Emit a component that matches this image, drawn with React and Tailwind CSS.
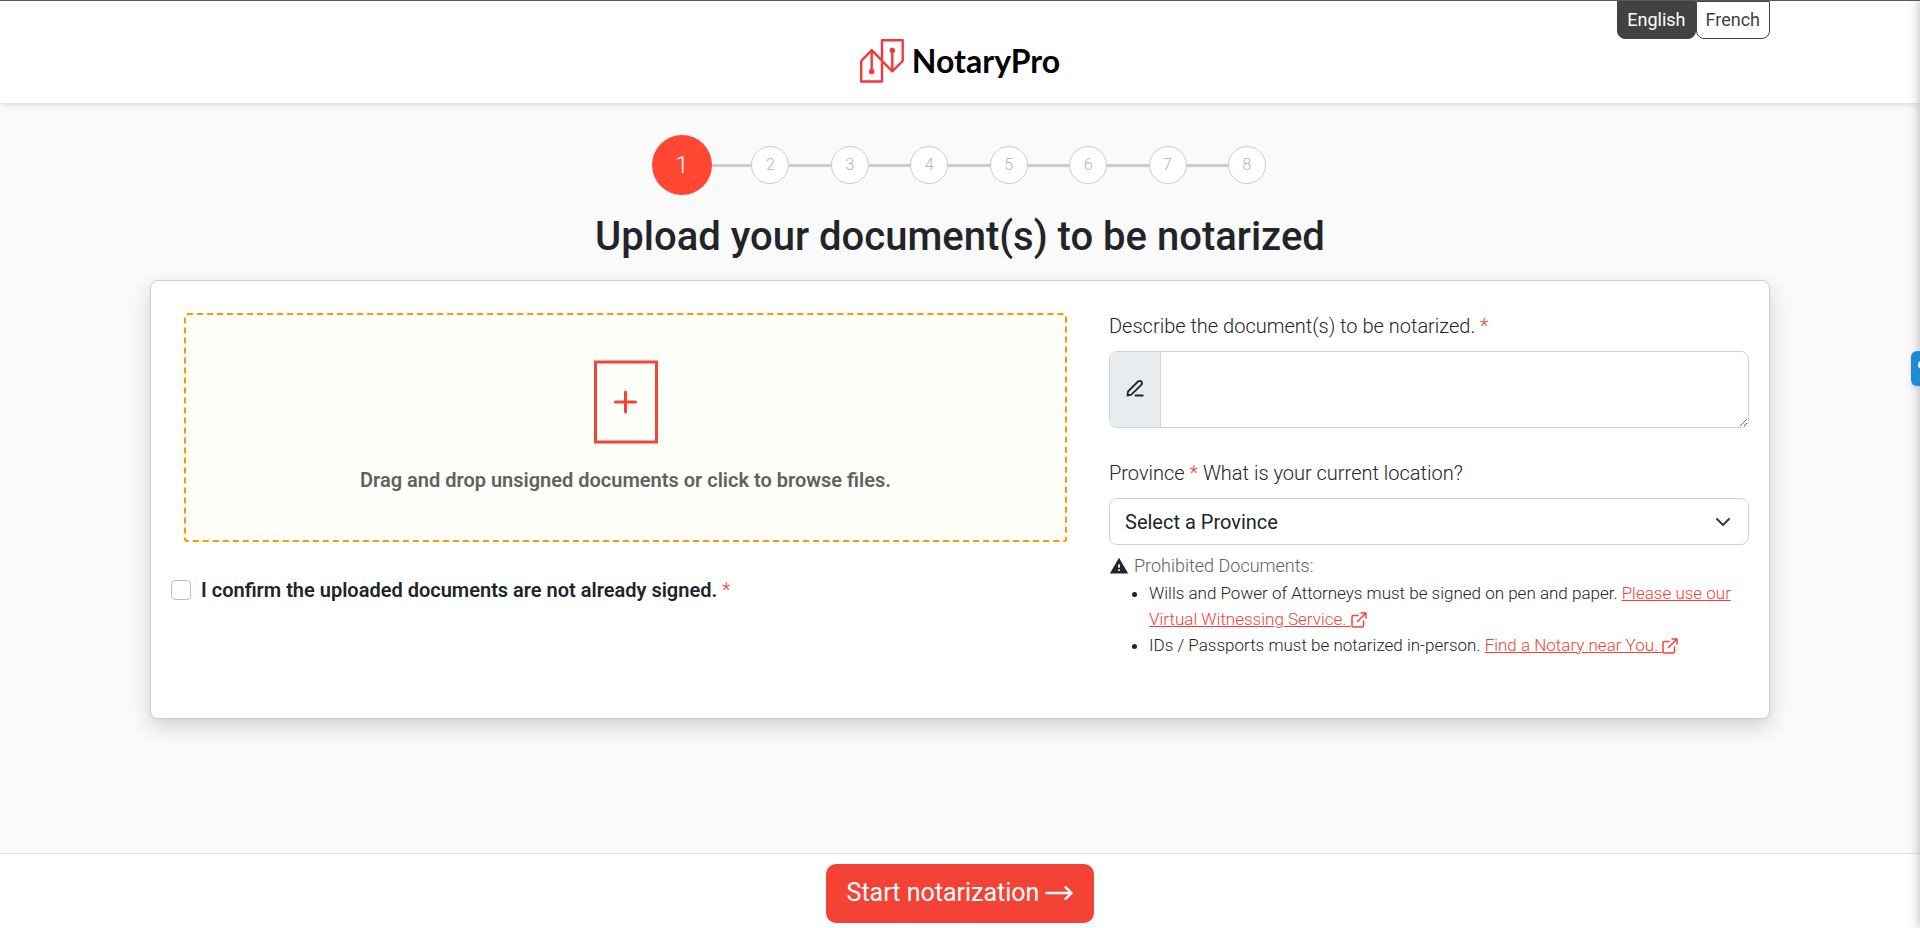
import React, { useState } from "react";
import { MdWarning } from "react-icons/md";

const STEPS = [1, 2, 3, 4, 5, 6, 7, 8];

const PROVINCES = [
  "Alberta",
  "British Columbia",
  "Manitoba",
  "New Brunswick",
  "Newfoundland and Labrador",
  "Nova Scotia",
  "Ontario",
  "Prince Edward Island",
  "Quebec",
  "Saskatchewan",
];

function Logo() {
  return (
    <a href="#" className="flex items-center gap-2 text-black">
      <svg width="44" height="44" viewBox="0 0 44 44" fill="none" stroke="#f4393a" strokeWidth="2.4">
        {/* one continuous outline: house on the left, tag on the right */}
        <path
          d="M22 23.500V42.500H1.200V22L11.700 11.200L32.300 32.300L42.700 22V1.200H22V20.500"
          strokeLinejoin="round"
        />
        <path d="M11.700 11.200V33M32.300 11.500V32.300" />
        <circle cx="11.700" cy="32.500" r="1.600" fill="#f4393a" />
        <circle cx="32.300" cy="11.500" r="1.600" fill="#f4393a" />
      </svg>
      <span className="font-['Lato',sans-serif] text-[32px] leading-10 font-bold">NotaryPro</span>
    </a>
  );
}

function Header({ lang, setLang }) {
  return (
    <header className="relative z-10 h-[103px] border-t border-[#5a5a5a] bg-white shadow-[0_2px_6px_rgba(0,0,0,0.12)]">
      <div className="flex justify-center pt-[38px]">
        <Logo />
      </div>
      {/* language switch hangs from the top edge */}
      <div className="absolute inset-x-0 top-0 mx-auto flex w-[84.375%] justify-end text-[18px] leading-9">
        {["English", "French"].map((name) => (
          <button
            key={name}
            type="button"
            onClick={() => setLang(name)}
            className={
              lang === name
                ? "rounded-b-lg border border-[#424242] bg-[#424242] px-[9px] text-white"
                : "rounded-b-lg border border-[#424242] bg-white px-[9px] text-[#424242]"
            }
          >
            {name}
          </button>
        ))}
      </div>
    </header>
  );
}

function Stepper({ current }) {
  return (
    <ol className="mx-auto flex w-[616px] max-w-full items-center pr-[2px] font-light">
      {STEPS.map((step) =>
        step === current ? (
          <li
            key={step}
            className="relative -mr-[2px] flex size-[60px] shrink-0 items-center justify-center rounded-full bg-[#ff4733] text-[24px] text-white"
          >
            {step}
          </li>
        ) : (
          <li key={step} className="flex flex-1 items-center">
            <span className="h-[3px] flex-1 bg-[#ccc]" />
            <span className="flex size-[38px] items-center justify-center rounded-full border border-[#ccc] bg-white text-[16px] text-[#b0b5b5]">
              {step}
            </span>
          </li>
        )
      )}
    </ol>
  );
}

function DropZone() {
  return (
    <button
      type="button"
      className="ml-[13px] flex h-[229px] flex-col items-center rounded-[3px] border-2 border-dashed border-[#ff9800] bg-[#fffffa] pt-[45px] text-[20px] leading-[30px] font-semibold text-[#616161]"
    >
      <svg width="64" height="84" viewBox="0 0 64 84" fill="none" stroke="#f44336" strokeWidth="3">
        <rect x="1.500" y="2" width="61" height="80" />
        <path d="M31.500 32V52M21.500 42H41.500" strokeLinecap="round" />
      </svg>
      <span className="mt-[21px]">Drag and drop unsigned documents or click to browse files.</span>
    </button>
  );
}

function Required() {
  return <span className="font-light text-[#f44336]">*</span>;
}

function ExternalLink({ children }) {
  return (
    <a href="#" className="text-[#f44336] underline">
      {children}{" "}
      <svg
        className="inline align-[-3px]"
        width="16"
        height="16"
        viewBox="0 0 16 16"
        fill="none"
        stroke="currentColor"
        strokeWidth="1.5"
        strokeLinecap="round"
        strokeLinejoin="round"
      >
        <path d="M7 3.500H2.500A1.500 1.500 0 0 0 1 5V13.500A1.500 1.500 0 0 0 2.500 15H11A1.500 1.500 0 0 0 12.500 13.500V9" />
        <path d="M6.500 9.500L15 1M10 1H15V6" />
      </svg>
    </a>
  );
}

export default function App() {
  const [lang, setLang] = useState("English");
  const [signed, setSigned] = useState(false);

  return (
    <div className="relative flex min-h-screen flex-col overflow-hidden bg-[#fafafa] font-['Roboto',sans-serif] text-[#212529]">
      <Header lang={lang} setLang={setLang} />

      <main className="mx-auto w-[84.375%] flex-1 pt-8">
        <Stepper current={1} />
        <h1 className="mt-[18px] text-center text-[40px] leading-[48px] font-medium">
          Upload your document(s) to be notarized
        </h1>

        <form className="mt-[19px] grid min-h-[439px] grid-cols-[7fr_5fr] gap-[42px] rounded-lg border border-[#ccc] bg-white px-5 py-8 shadow-[0_8px_20px_rgba(0,0,0,0.17)]">
          <div className="flex flex-col">
            <DropZone />
            <label className="mt-[33px] flex items-center gap-[10px] text-[20px] leading-[30px] font-semibold">
              <input
                type="checkbox"
                checked={signed}
                onChange={(e) => setSigned(e.target.checked)}
                className="size-5 appearance-none rounded border border-[#bfbfbf] bg-white checked:bg-[#f44336]"
              />
              <span>
                I confirm the uploaded documents are not already signed. <Required />
              </span>
            </label>
          </div>

          <div className="text-[20px] leading-[26px] font-light">
            <label htmlFor="description" className="block">
              Describe the document(s) to be notarized. <Required />
            </label>
            <div className="mt-3 flex h-[77px] rounded-lg border border-[#ced4da]">
              <span className="flex w-[51px] items-center justify-center rounded-l-lg border-r border-[#ced4da] bg-[#e9ecef] pb-1">
                <svg
                  width="18"
                  height="18"
                  viewBox="0 0 18 18"
                  fill="none"
                  stroke="currentColor"
                  strokeWidth="1.8"
                  strokeLinecap="round"
                  strokeLinejoin="round"
                >
                  <path d="M1.500 16.500L2 12.500L12 2.500A2.200 2.200 0 0 1 15.300 5.800L5.300 15.700Z" />
                  <path d="M9.500 16.500H16.800" />
                </svg>
              </span>
              <textarea id="description" className="min-w-0 flex-1 rounded-r-lg bg-white p-3 outline-none" />
            </div>

            <label htmlFor="province" className="mt-8 block">
              Province <Required /> What is your current location?
            </label>
            <div className="mt-3 grid items-center">
              <select
                id="province"
                className="col-start-1 row-start-1 h-[47px] w-full appearance-none rounded-lg border border-[#ced4da] bg-white px-[15px] font-normal"
              >
                <option>Select a Province</option>
                {PROVINCES.map((p) => (
                  <option key={p}>{p}</option>
                ))}
              </select>
              <svg
                className="pointer-events-none col-start-1 row-start-1 mr-[18px] justify-self-end"
                width="16"
                height="16"
                viewBox="0 0 16 16"
                fill="none"
                stroke="#343a40"
                strokeWidth="2"
                strokeLinecap="round"
                strokeLinejoin="round"
              >
                <path d="m2 5 6 6 6-6" />
              </svg>
            </div>

            <p className="mt-[7px] flex items-center gap-[5px] text-[18px] leading-7 text-[#59626a]">
              <MdWarning className="text-[#212529]" size={20} />
              Prohibited Documents:
            </p>
            <ul className="list-disc pl-10 text-[17px]">
              <li>
                Wills and Power of Attorneys must be signed on pen and paper.{" "}
                <ExternalLink>Please use our Virtual Witnessing Service.</ExternalLink>
              </li>
              <li>
                IDs / Passports must be notarized in-person.{" "}
                <ExternalLink>Find a Notary near You.</ExternalLink>
              </li>
            </ul>
          </div>
        </form>
      </main>

      <footer className="flex h-[75px] items-center justify-center border-t border-[#dee2e6] bg-white pt-1">
        <button
          type="button"
          className="flex h-[59px] items-center gap-[6px] rounded-[10px] bg-[#f44336] px-[21px] text-[25px] text-white"
        >
          Start notarization
          <svg
            width="28"
            height="14"
            viewBox="0 0 28 14"
            fill="none"
            stroke="currentColor"
            strokeWidth="2.4"
            strokeLinecap="round"
            strokeLinejoin="round"
          >
            <path d="M1.500 7H26.500M20.500 1.200L26.500 7L20.500 12.800" />
          </svg>
        </button>
      </footer>

      {/* collapsed help drawer, only its shadow and tab reach into the page */}
      <aside className="absolute inset-y-0 left-full z-20 w-4 shadow-[0_0_12px_rgba(0,0,0,0.3)]" />
      <button
        type="button"
        aria-label="Help"
        className="absolute top-[351px] right-0 z-20 flex h-[35px] w-[9px] overflow-hidden rounded-l-md bg-[#1e8ad6] pt-[10px] pl-[7px] shadow-md"
      >
        <span className="size-2 shrink-0 rounded-full bg-white" />
      </button>
    </div>
  );
}
